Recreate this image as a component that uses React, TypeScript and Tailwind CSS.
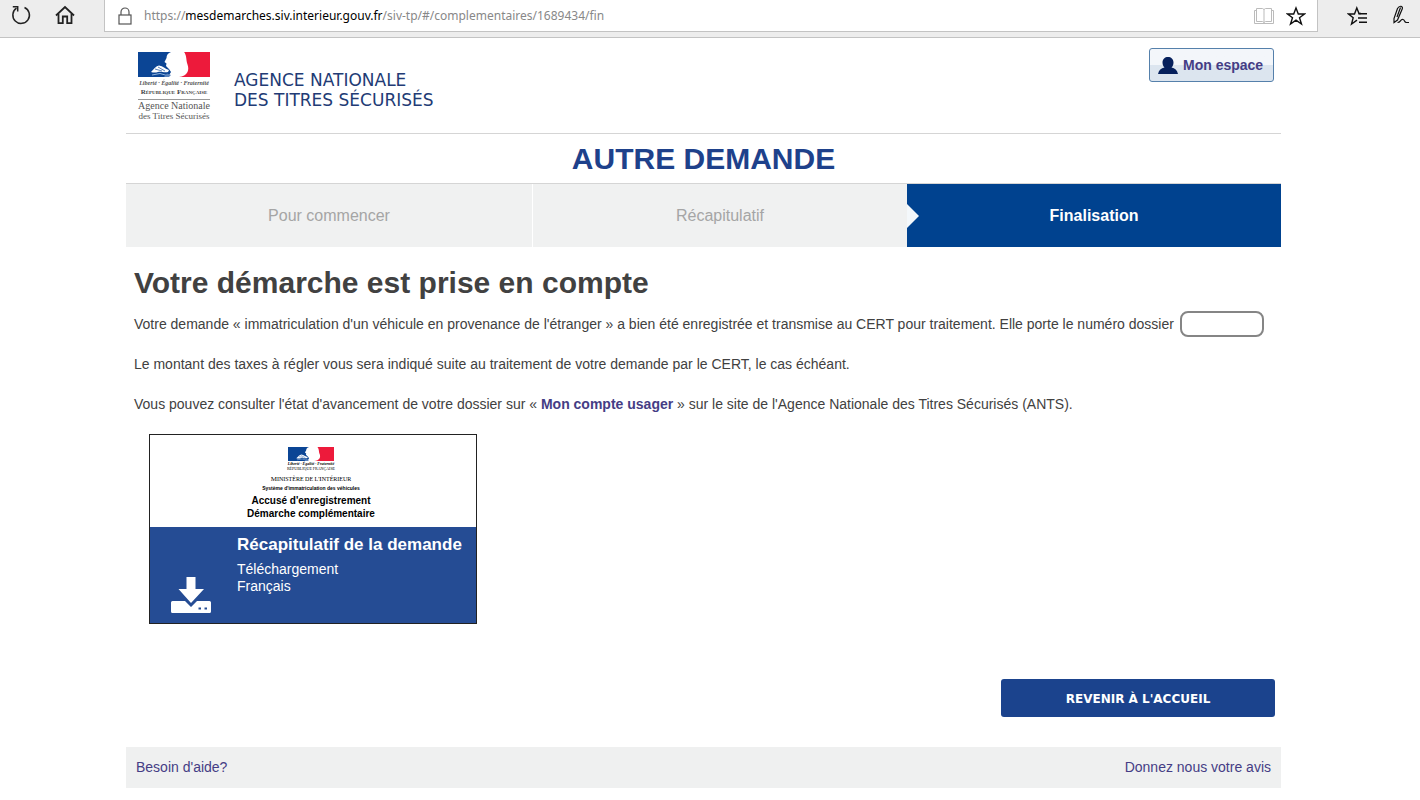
import React from "react";
import clsx from "clsx";

const steps = [
  { label: "Pour commencer", active: false, grow: "basis-[407px]" },
  { label: "Récapitulatif", active: false, grow: "basis-[374px]" },
  { label: "Finalisation", active: true, grow: "basis-[374px]" },
];

const Flag = ({ className }: { className: string }) => (
  <svg viewBox="0 0 72 25" preserveAspectRatio="none" className={className} aria-hidden="true">
    <rect width="72" height="25" fill="#fff" />
    <path
      d="M0 0H33C30 1 28.500 3 28.500 6L26.500 10L28.500 11.500L28 14L31 17L33 20L30 25H0Z"
      fill="#0b4595"
    />
    <path
      d="M46 0H72V25H41C45 24.500 48 23 49.500 20C50.500 18 50.500 15 49.500 12.500C48.500 10 48.500 7 48 4.500C47.500 2.500 47 1 46 0Z"
      fill="#ed1a3b"
    />
    <path
      d="M13 20C16 17 18 14 21 13.500C25 14 27 17 31 18L30 20C26 21 23 19 20 20C18 20.500 16 21 13 20Z"
      fill="#fff"
    />
    <path
      d="M17 17L24 19M20 15L27 19"
      stroke="#5c84bd"
      strokeWidth="1"
      fill="none"
    />
    <path d="M14 23L22 21.500L29 23.500" stroke="#8fb2dc" strokeWidth="1" fill="none" />
    <path d="M29 21.500L33 23L31 25H26Z" fill="#5c84bd" />
  </svg>
);

const BrowserBar = () => (
  <div className="flex h-[38px] items-start border-b border-[#c3c3c3] bg-[#ededed]">
    <div className="flex w-[104px] shrink-0">
      <button type="button" aria-label="Actualiser" className="ml-[10px] mt-1">
        <svg width="22" height="22" viewBox="0 0 22 22" fill="none" stroke="#222" strokeWidth="1.5">
          <path d="M14.500 3.500A8.300 8.300 0 1 1 6.500 4.200" />
          <path d="M2.800 2.700H7.700V7.600" />
        </svg>
      </button>
      <button type="button" aria-label="Accueil" className="ml-[22px] mt-1">
        <svg width="22" height="22" viewBox="0 0 22 22" fill="none" stroke="#222" strokeWidth="1.800">
          <path d="M2 11.500L11 3L20 11.500" />
          <path d="M4.500 10V19.200H8.800V12.500H13.200V19.200H17.500V10" />
        </svg>
      </button>
    </div>
    <div className="flex h-8 grow items-center border-x border-b border-[#c3c3c3] bg-white">
      <svg width="14" height="18" viewBox="0 0 14 18" className="ml-[13px]" fill="none" stroke="#555" strokeWidth="1.200">
        <rect x="1" y="8" width="12" height="9" />
        <path d="M3 8V5A4 4 0 0 1 11 5V8" />
      </svg>
      <div className="ml-3 font-['Noto_Sans',sans-serif] text-[12px] leading-[30px] text-[#888]">
        https://<span className="text-black">mesdemarches.siv.interieur.gouv.fr</span>
        /siv-tp/#/complementaires/1689434/fin
      </div>
      <button type="button" aria-label="Mode Lecture" className="ml-auto">
        <svg width="20" height="18" viewBox="0 0 20 18" fill="none" stroke="#bbb" strokeWidth="1">
          <path d="M2.500 1.500H8.500L10 2.500L11.500 1.500H17.500V14.500H11.500L10 15.500L8.500 14.500H2.500Z" />
          <path d="M10 2.500V15.500M2.500 3.500H.5V16.500H19.500V3.500H17.500" />
        </svg>
      </button>
      <button type="button" aria-label="Ajouter aux favoris" className="ml-3 mr-[11px]">
        <svg width="20" height="20" viewBox="0 0 20 20" fill="none" stroke="#111" strokeWidth="1.400">
          <path d="M10 2L12.300 8H18.500L13.500 11.700L15.500 18L10 14.200L4.500 18L6.500 11.700L1.500 8H7.700Z" />
        </svg>
      </button>
    </div>
    <div className="flex w-[102px] shrink-0">
      <button type="button" aria-label="Hub" className="ml-[29px] mt-[5px]">
        <svg width="22" height="20" viewBox="0 0 22 20" fill="none" stroke="#111" strokeWidth="1.400">
          <path d="M14 7.500H12L9.800 2L7.500 8H1.500L6.200 11.700L4.500 18L10 14.200" />
          <path d="M11.500 7.700H20M11 12H20M12 16.300H20" />
        </svg>
      </button>
      <button type="button" aria-label="Notes" className="ml-[22px] mt-1">
        <svg width="20" height="22" viewBox="0 0 20 22" fill="none" stroke="#111" strokeWidth="1.200">
          <path d="M6.500 4.500C8.500 1 12.500 2 11.200 5L6.500 16L3 18.500V14.500L6.500 4.500ZM9.500 3.500L6 13" />
          <path d="M6.500 18.500C10 18.500 9 15 12 15.500C14 16 13 18.500 15.500 18.500H18" />
        </svg>
      </button>
    </div>
  </div>
);

const AntsLogo = () => (
  <div className="flex w-[72px] flex-col items-center whitespace-nowrap font-['Liberation_Serif',serif] text-[#555]">
    <Flag className="h-[25px] w-[72px]" />
    <span className="mt-[2px] text-[6px] font-bold italic leading-[8px]">Liberté · Égalité · Fraternité</span>
    <span className="text-[7px] font-bold leading-[11px] text-[#444]">
      R<span className="text-[5px]">ÉPUBLIQUE</span> F<span className="text-[5px]">RANÇAISE</span>
    </span>
    <span className="mt-px w-full border-t border-[#999]" />
    <span className="mt-px text-[10px] leading-[10px]">Agence Nationale</span>
    <span className="text-[9px] leading-[10px]">des Titres Sécurisés</span>
  </div>
);

const Header = () => (
  <header className="flex h-24 items-start border-b border-[#d5d5d5] pl-3 pr-[7px]">
    <div className="mt-[14px]">
      <AntsLogo />
    </div>
    <div className="ml-6 mt-8 font-['DejaVu_Sans',Verdana,sans-serif] text-[17px] leading-5 text-[#223b75]">
      AGENCE NATIONALE
      <br />
      DES TITRES SÉCURISÉS
    </div>
    <button
      type="button"
      className="ml-auto mt-[10px] flex h-[34px] w-[125px] items-center rounded-[3px] border border-[#5580ab] bg-linear-to-b from-[#f3f6fa] from-50% to-[#dce5ef] to-50% pl-2 text-sm font-bold text-[#453d85]"
    >
      <svg width="20" height="17" viewBox="0 0 20 17" fill="#06205c" className="mr-[5px]">
        <path d="M10 0C13 0 15.500 2 15.500 5.500C15.500 8 14.500 9.500 13.500 10.500C17 11 19 13 20 17H0C1 13 3 11 6.500 10.500C5.500 9.500 4.500 8 4.500 5.500C4.500 2 7 0 10 0Z" />
      </svg>
      Mon espace
    </button>
  </header>
);

const Steps = () => (
  <ol className="flex h-[63px] text-base">
    {steps.map((step, i) => (
      <li
        key={step.label}
        className={clsx(
          "relative flex shrink grow items-center justify-center",
          step.grow,
          step.active ? "bg-[#00428f] font-bold text-white" : "bg-[#f0f1f1] text-[#a5a5a5]",
          i === 0 && "border-r border-white"
        )}
      >
        {step.active && (
          <svg width="12" height="24" viewBox="0 0 12 24" className="absolute left-0 top-5">
            <path d="M0 0L12 12L0 24Z" fill="#f4f8fb" />
          </svg>
        )}
        {step.label}
      </li>
    ))}
  </ol>
);

const DownloadCard = () => (
  <a href="#recapitulatif" className="ml-[15px] mt-5 block w-[328px] border border-[#222]">
    <div className="flex h-[92px] flex-col items-center bg-white pr-1 pt-3 text-black">
      <Flag className="h-[14px] w-[46px]" />
      <span className="font-['Liberation_Serif',serif] text-[4px] font-bold italic leading-[5px]">
        Liberté · Égalité · Fraternité
      </span>
      <span className="font-['Liberation_Serif',serif] text-[4px] leading-[5px]">RÉPUBLIQUE FRANÇAISE</span>
      <span className="mt-1 font-['Liberation_Serif',serif] text-[7px] leading-[9px]">
        M<span className="text-[6px]">INISTÈRE DE L'</span>I<span className="text-[6px]">NTÉRIEUR</span>
      </span>
      <span className="text-[5px] font-bold leading-[9px]">Système d'immatriculation des véhicules</span>
      <span className="mt-px text-[10px] font-bold leading-[13px]">Accusé d'enregistrement</span>
      <span className="text-[10px] font-bold leading-[13px]">Démarche complémentaire</span>
    </div>
    <div className="flex h-24 bg-[#254c94] text-white">
      <svg width="40" height="37" viewBox="0 0 40 37" className="ml-[21px] mt-[50px] shrink-0" fill="#fff">
        <path d="M15.500 0H24.500V12H33L20 26L7.500 12H15.500Z" />
        <path
          fillRule="evenodd"
          d="M1.500 24H14L20 30L26 24H38.500Q40 24 40 25.500V34.500Q40 36 38.500 36H1.500Q0 36 0 34.500V25.500Q0 24 1.500 24ZM27.500 30.500V32.500H30V30.500ZM33.500 30.500V32.500H36V30.500Z"
        />
      </svg>
      <div className="ml-[26px] mt-2">
        <h3 className="text-[17px] font-bold leading-5">Récapitulatif de la demande</h3>
        <p className="mt-[6px] text-sm leading-[17px]">
          Téléchargement
          <br />
          Français
        </p>
      </div>
    </div>
  </a>
);

const App = () => {
  return (
    <div className="min-h-screen bg-white font-['Liberation_Sans',Arial,sans-serif] text-[#414141]">
      <BrowserBar />
      <div className="ml-[126px] mr-[139px]">
        <Header />
        <h1 className="border-b border-[#d5d5d5] text-center text-[30px] font-bold leading-[49px] text-[#1e418b]">
          AUTRE DEMANDE
        </h1>
        <Steps />
        <main className="pl-2 pr-[6px]">
          <h2 className="mt-4 text-[30px] font-bold leading-10">Votre démarche est prise en compte</h2>
          <div className="mt-[11px] text-sm leading-5">
            <p className="flex items-center">
              <label htmlFor="dossier">
                Votre demande « immatriculation d'un véhicule en provenance de l'étranger » a bien été enregistrée et
                transmise au CERT pour traitement. Elle porte le numéro dossier
              </label>
              <input
                id="dossier"
                type="text"
                readOnly
                className="-my-1 ml-[6px] h-[26px] w-[84px] rounded-lg border-2 border-[#858585] bg-white px-2"
              />
            </p>
            <p className="mt-5">
              Le montant des taxes à régler vous sera indiqué suite au traitement de votre demande par le CERT, le cas
              échéant.
            </p>
            <p className="mt-5">
              Vous pouvez consulter l'état d'avancement de votre dossier sur «{" "}
              <a href="#compte" className="font-bold text-[#453d85]">
                Mon compte usager
              </a>{" "}
              » sur le site de l'Agence Nationale des Titres Sécurisés (ANTS).
            </p>
          </div>
          <DownloadCard />
          <div className="mt-[55px] flex justify-end">
            <button
              type="button"
              className="h-[38px] w-[274px] rounded-[3px] bg-[#1b438d] pt-[2px] font-['DejaVu_Sans',Verdana,sans-serif] text-xs font-bold text-white"
            >
              REVENIR À L'ACCUEIL
            </button>
          </div>
        </main>
        <footer className="mt-[30px] flex h-[41px] items-center justify-between bg-[#eff0f0] px-[10px] pb-px text-sm text-[#453d85]">
          <a href="#aide">Besoin d'aide?</a>
          <a href="#avis">Donnez nous votre avis</a>
        </footer>
      </div>
    </div>
  );
};

export default App;
